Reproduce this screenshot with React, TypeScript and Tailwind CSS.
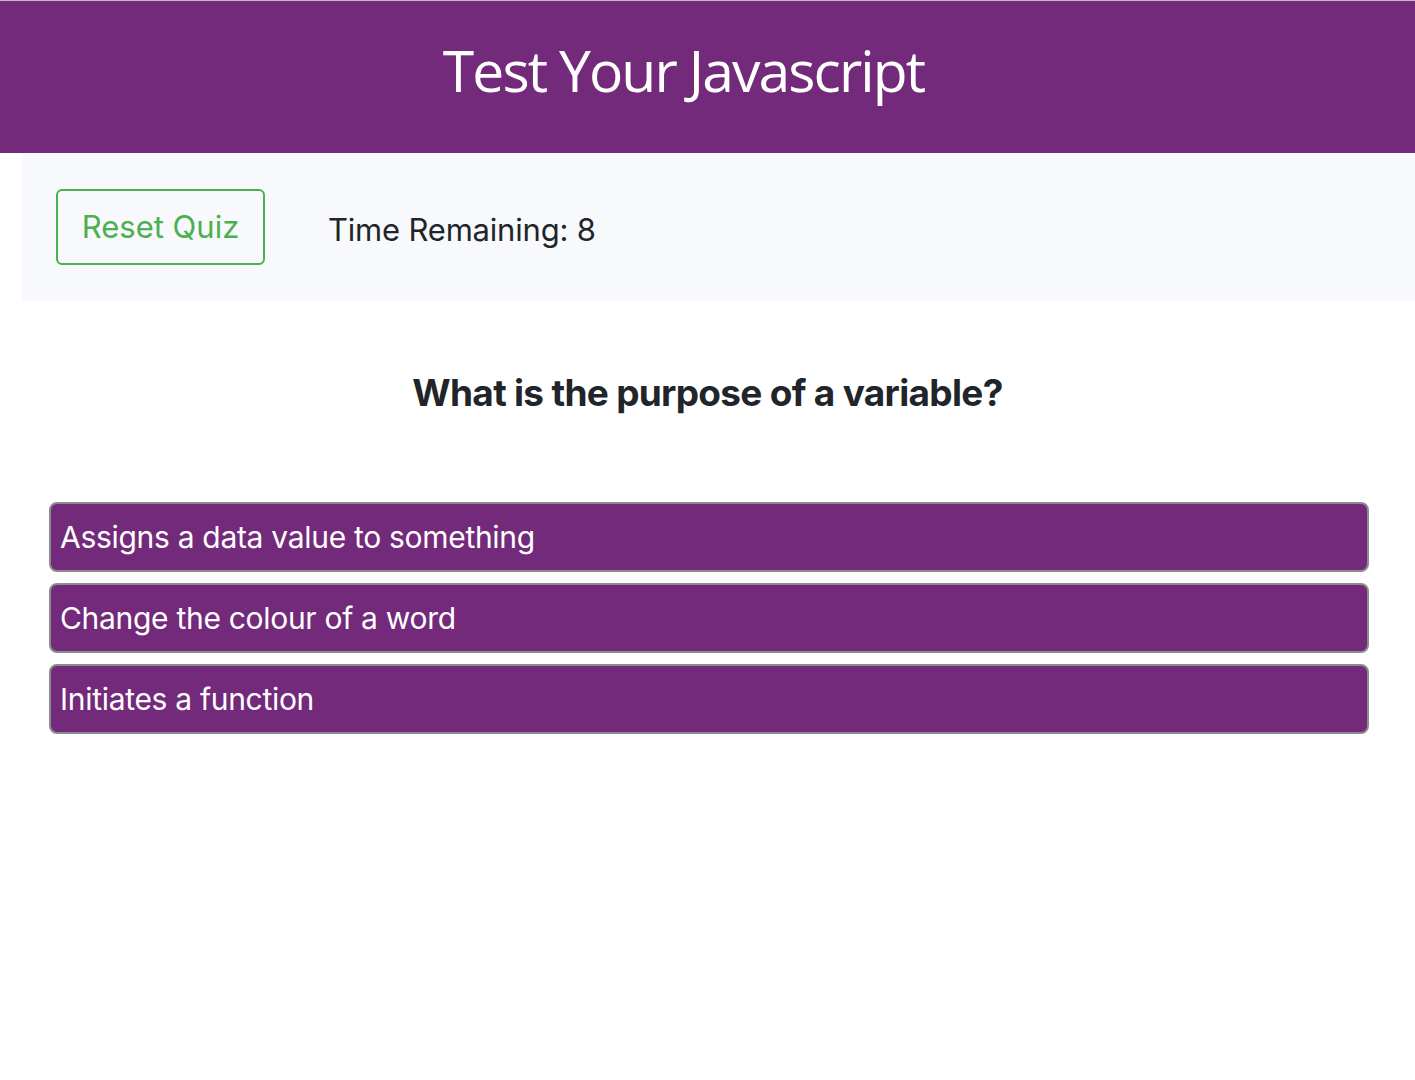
import React from "react";

const options = [
  "Assigns a data value to something",
  "Change the colour of a word",
  "Initiates a function",
];

function App() {
  return (
    <div className="min-h-[1080px] bg-white font-['Inter',sans-serif]">
      <header className="h-[153px] bg-[#732a7a] border-t border-[#c9b6cb] flex justify-center">
        <h1 className="pt-[34px] pr-[48px] text-[57px] leading-[70px] text-white font-['Open_Sans',sans-serif] tracking-[-1.9px]">
          Test Your Javascript
        </h1>
      </header>
      <div className="ml-[22px] h-[148px] bg-[#f8f9fc] flex items-center pl-[34px] gap-[63px]">
        <button className="w-[209px] h-[76px] border-2 border-[#4caf50] rounded-[6px] text-[#4caf50] text-[31px] bg-transparent">
          Reset Quiz
        </button>
        <span className="pt-[6px] text-[31px] text-[#212529] tracking-[-0.2px]">Time Remaining: 8</span>
      </div>
      <div className="pt-[70px] pb-[85px] text-center">
        <h2 className="text-[37px] leading-[44px] font-bold text-[#212529] tracking-[-0.7px]">
          What is the purpose of a variable?
        </h2>
      </div>
      <div className="pt-[2px] pl-[49px] pr-[46px] flex flex-col gap-[11px]">
        {options.map((o) => (
          <div
            key={o}
            className="h-[70px] bg-[#732a7a] border-2 border-[#8c8c8c] rounded-[8px] flex items-center px-[9px] text-white text-[30px] tracking-[-0.3px]"
          >
            {o}
          </div>
        ))}
      </div>
    </div>
  );
}

export default App;
